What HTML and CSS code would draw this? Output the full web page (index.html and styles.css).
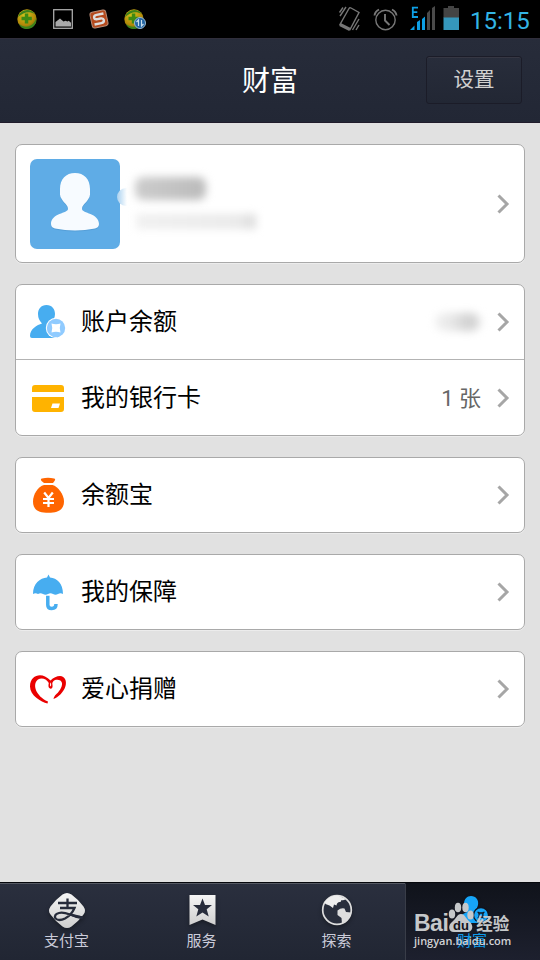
FILE: index.html
```html
<!DOCTYPE html>
<html lang="zh-CN">
<head>
<meta charset="utf-8">
<title>财富</title>
<link rel="stylesheet" href="styles.css">
</head>
<body>
<div class="screen">
  <div class="status">
    <svg class="status-icons" width="460" height="38" viewBox="0 0 460 38">
      <defs>
        <radialGradient id="ball" cx=".4" cy=".3" r=".75"><stop offset="0" stop-color="#d2c51e"/><stop offset=".65" stop-color="#b58a09"/><stop offset="1" stop-color="#66720c"/></radialGradient>
        <g id="guard">
          <circle cx="10" cy="10" r="9.7" fill="url(#ball)"/>
          <path d="M1 8C3 1 13-2 18 5C12 2 7 3 1 8ZM2 15C8 20 16 18 19 10C20 16 15 20 10 20C6 20 3 18 2 15Z" fill="#3c821b"/>
          <path d="M7.800 4.500h3.500v3.300h3.500v3.500h-3.500V14.500h-3.500v-3.200H4.500v-3.500h3.300Z" fill="#3d8a13"/>
        </g>
      </defs>
      <use href="#guard" x="17" y="9"/>
      <rect x="53.700" y="9.700" width="18.600" height="18.600" fill="none" stroke="#aaa" stroke-width="1.300"/>
      <path d="M55.500 26.500v-4.500l4.500-3.500 3.500 3 2-.8 2 .8 1.200-.8 2.300 2v3.800Z" fill="#aaa"/>
      <g transform="rotate(-12 99 19)">
        <rect x="91" y="11" width="16" height="16" rx="2.500" fill="#b54a1d" stroke="#b98d78" stroke-width="1"/>
        <path d="M104.500 14.500H97.500Q94.500 14.500 94.500 17Q94.500 18.800 97.500 18.800H100.500Q103.500 18.800 103.500 21Q103.500 23.500 100.500 23.500H93.500" fill="none" stroke="#ddd" stroke-width="2.400"/>
      </g>
      <use href="#guard" x="124" y="9"/>
      <circle cx="140" cy="23" r="5.500" fill="#2264a3" stroke="#96b7cf" stroke-width="1"/>
      <path d="M138.500 26v-6l-2 2M141.500 20v6l2-2" fill="none" stroke="#c6ddeb" stroke-width="1.200"/>
      <g fill="none" stroke="#777" stroke-width="1.400">
        <path d="M349 8.500Q349.700 7.300 351 8L359 12.500L350 29.500L340 24.500Z"/>
        <path d="M340 24.500l10 5" stroke-width="3.200"/>
        <path d="M340 16l6-9M339.500 12.500l3.500-5M352.500 30l6.500-11M356 30l3-5"/>
        <circle cx="385.500" cy="20" r="9.700"/>
        <path d="M385 14v6.500l4.500 4.500M374.500 15.500Q375 11.500 379 9.500M396.500 15.500Q396 11.500 392 9.500" stroke-width="1.900"/>
      </g>
      <path d="M410 30l4.500-4.500V30ZM417 22l3-2V30h-3ZM422 19l3-2.500V30h-3Z" fill="#0d9fe5"/>
      <path d="M427 13l3-3V30h-3ZM432 8l3-2V30h-3Z" fill="#4a4a4a"/>
      <path d="M418 7.700h-5.200v9.300h5.200M412.800 12.200h4.500" fill="none" stroke="#0d9fe5" stroke-width="1.800"/>
      <path d="M448 6h6v2h5v10h-15.500V8h4.500Z" fill="#444"/>
      <rect x="443.500" y="17.500" width="15.500" height="12.500" fill="#3597bc"/>
    </svg>
    <span class="clock">15:15</span>
  </div>

  <header class="header">
    <span></span>
    <h1 class="title">财富</h1>
    <button class="settings">设置</button>
  </header>

  <main class="content">
    <section class="card profile">
      <svg class="avatar" width="90" height="90" viewBox="0 0 90 90">
        <rect width="90" height="90" rx="7" fill="#5face6"/>
        <path d="M45 15C54 15 60 21 60 31V36.500Q60 39 58 41.500C56 45 52 47 52 51C52 55.500 69 55 69 66Q69 69.500 65 70.500Q45 74.500 25 70.500Q21 69.500 21 66C21 55 38 55.500 38 51C38 47 34 45 32 41.500Q30 39 30 36.500V31C30 21 36 15 45 15Z" fill="#4c91ca" opacity=".5"/>
        <path d="M45 14C54 14 60 20 60 30V35.500Q60 38 58 40.500C56 44 52 46 52 50C52 54.500 69 54 69 65Q69 68.500 65 69.500Q45 73.500 25 69.500Q21 68.500 21 65C21 54 38 54.500 38 50C38 46 34 44 32 40.500Q30 38 30 35.500V30C30 20 36 14 45 14Z" fill="#f7fbff"/>
      </svg>
      <div class="identity">
        <span class="smudge smudge-edge"></span>
        <span class="smudge smudge-name"></span>
        <span class="smudge smudge-account"></span>
      </div>
      <svg class="chevron" width="14" height="22" viewBox="0 0 14 22"><path d="M2.500 2.500L11 11L2.500 19.500"/></svg>
    </section>

    <section class="card">
      <div class="row">
        <svg class="icon" width="38" height="38" viewBox="0 0 38 38">
          <path d="M17.500 2C23 2 26 6 26 11C26 15 24 17.500 22 19.500C22 22 27 22 29 25V35H3Q1 35 1 33C1 26 8 22 13 20.500Q9 16.500 9 11C9 6 12 2 17.500 2Z" fill="#47adf0"/>
          <circle cx="27" cy="25" r="10.200" fill="#fff"/><circle cx="27" cy="25" r="9.200" fill="#90cbff"/>
          <path d="M22.500 20.500Q27 22 31.500 20.500Q30 25 31.500 29.500Q27 28 22.500 29.500Q24 25 22.500 20.500Z" fill="#fff"/>
        </svg>
        <span class="label">账户余额</span>
        <span class="smudge smudge-balance"></span>
        <svg class="chevron" width="14" height="22" viewBox="0 0 14 22"><path d="M2.500 2.500L11 11L2.500 19.500"/></svg>
      </div>
      <div class="row">
        <svg class="icon" width="38" height="38" viewBox="0 0 38 38">
          <path d="M6 6H32Q35 6 35 9V13H3V9Q3 6 6 6ZM3 18H35V30Q35 33 32 33H6Q3 33 3 30Z" fill="#ffb300"/>
          <path d="M23.500 24.500h7.500l-1.500 4.500h-7.500Z" fill="#fff"/>
        </svg>
        <span class="label">我的银行卡</span>
        <span class="value">1 张</span>
        <svg class="chevron" width="14" height="22" viewBox="0 0 14 22"><path d="M2.500 2.500L11 11L2.500 19.500"/></svg>
      </div>
    </section>

    <section class="card">
      <div class="row">
        <svg class="icon" width="38" height="38" viewBox="0 0 38 38">
          <path d="M13 2.500Q19 1 25 2.500Q27 3 25.500 5L24 7H15L12.500 5Q11 3 13 2.500Z" fill="#ff6500"/>
          <path d="M15 9H23.500C29 10.500 35 18.500 35 25.500C35 33.500 29 36.800 19.500 36.800C9 36.800 4 33.500 4 25.500C4 18.500 9 10.500 15 9Z" fill="#ff6500"/>
          <path d="M15.200 16.500l4.300 5.500 4.300-5.500M19.500 21v10M14 23h11M14 27h11" fill="none" stroke="#fff" stroke-width="2.200"/>
        </svg>
        <span class="label">余额宝</span>
        <svg class="chevron" width="14" height="22" viewBox="0 0 14 22"><path d="M2.500 2.500L11 11L2.500 19.500"/></svg>
      </div>
    </section>

    <section class="card">
      <div class="row">
        <svg class="icon" width="38" height="38" viewBox="0 0 38 38">
          <path d="M19.500 1.500L21 4.500C28 5 34 10.500 34 21Q31.500 19.500 29 21Q26.500 22.500 24 21Q21.500 19.500 19 21Q16.500 22.500 14 21Q11.500 19.500 9 21Q6.500 19.500 4 21C4 10.500 11 5 18 4.500Z" fill="#47adf0"/>
          <path d="M18.800 22.800v9.200Q18.800 35.500 22.700 35.500Q27 35.500 27 31" fill="none" stroke="#47adf0" stroke-width="3.500"/>
        </svg>
        <span class="label">我的保障</span>
        <svg class="chevron" width="14" height="22" viewBox="0 0 14 22"><path d="M2.500 2.500L11 11L2.500 19.500"/></svg>
      </div>
    </section>

    <section class="card">
      <div class="row">
        <svg class="icon" width="38" height="38" viewBox="0 0 38 38">
          <path d="M18.500 33.500C12 32 1 25.500 1 16.500C1 6 10 3.500 16 6.500Q19 8 21.500 10.500Q26 6 31 6C36 6.500 38 11 36.500 16C35 22 29 27.500 24.500 29Q24.500 27.500 26 25.500C30 22 33.500 17 33 13C32.500 10 29 9 26 10Q22.500 12 23.500 15Q24 18.700 21.500 18.700Q18.500 18 19.800 13C17 8 12 7.500 9 9.500C3 14 6.500 26 19 31.500Z" fill="#ea0000"/>
          <path d="M21.500 12.500Q20.500 16 21.500 16.500Q22.700 16 22 13Z" fill="#fff"/>
        </svg>
        <span class="label">爱心捐赠</span>
        <svg class="chevron" width="14" height="22" viewBox="0 0 14 22"><path d="M2.500 2.500L11 11L2.500 19.500"/></svg>
      </div>
    </section>
  </main>

  <nav class="tabs">
    <div class="tab">
      <svg class="tab-icon" width="38" height="38" viewBox="0 0 38 38">
        <defs><linearGradient id="silver" x1="0" y1="0" x2="0" y2="1"><stop stop-color="#f5f5f5"/><stop offset="1" stop-color="#cfcfcf"/></linearGradient></defs>
        <path d="M14.500 2.500Q19-.500 23.500 2.500Q31 8 35.500 14.500Q38.500 19 35.500 22.500Q30 30 23.500 34.500Q19 37.500 14.500 34.500Q8 30 2.500 22.500Q-.500 19 2.500 14.500Q7 8 14.500 2.500Z" fill="url(#silver)"/>
        <path d="M10 11h19M19.500 6.500v9.500M12 16h14.500Q23.500 23 17 26.500Q11 29.500 7.500 26.500Q5.500 22.500 11 21Q15 20 22 22.500Q28 25 35 25.500" fill="none" stroke="#272c3b" stroke-width="2.300"/>
        <path d="M23 21.500L35 24.500L34 27Q28 26.500 22 23.500Z" fill="#272c3b"/>
      </svg>
      <span>支付宝</span>
    </div>
    <div class="tab">
      <svg class="tab-icon" width="38" height="38" viewBox="0 0 38 38">
        <path d="M6.500 3H32.500V33L19.500 27.500L6.500 33Z" fill="url(#silver)"/>
        <path d="M19.500 6.500L22 13H29L23.700 17.300L25.700 24.500L19.500 20.500L13.300 24.500L15.300 17.300L10 13H17Z" fill="#272c3b"/>
      </svg>
      <span>服务</span>
    </div>
    <div class="tab">
      <svg class="tab-icon" width="38" height="38" viewBox="0 0 38 38">
        <circle cx="19" cy="18" r="14.300" fill="#292e3c" stroke="#ddd" stroke-width="1.700"/>
        <path d="M6.500 10Q12 3 20 3.500L28 7Q25 9 23.500 8L22.500 10Q19 9.500 18.500 13.500L16 12.500L15 16L11.500 13.500L7.500 12Z" fill="#eee"/>
        <path d="M19.500 18.500Q23 15.500 26.500 16.500L28 20L33.500 20.500Q31 29 24 32L23.500 26L19.500 23Z" fill="#ddd"/>
      </svg>
      <span>探索</span>
    </div>
    <div class="tab tab-active">
      <svg class="tab-icon" width="38" height="38" viewBox="0 0 38 38">
        <path d="M18 4C23 4 26 8 25 13Q24 17 22 20L28 24V31H4Q4 24 14 20Q11 16 11 12C11 7 14 4 18 4Z" fill="#16a5f8"/>
        <circle cx="28" cy="23" r="7.500" fill="#16a5f8" stroke="#10131d" stroke-width="1.300"/>
        <path d="M24.500 20q3.500 2 7 0M24.500 26q3.500-2 7 0M25.500 20q1.500 3 0 6M30.500 20q-1.500 3 0 6" fill="none" stroke="#10131d" stroke-width="1.300"/>
      </svg>
      <span>财富</span>
      <div class="watermark">
        <div class="brand"><span class="brand-latin">Bai</span>
          <svg class="paw" width="26" height="32" viewBox="0 0 26 32">
            <g fill="#c5c8ca"><ellipse cx="4" cy="13" rx="3.200" ry="4.500"/><ellipse cx="10" cy="6.500" rx="3.200" ry="4.700"/><ellipse cx="17.500" cy="6.500" rx="3.200" ry="4.700"/><ellipse cx="22.500" cy="14" rx="3.200" ry="4.500"/><path d="M13 13C17 13 18 18 22 21C27 26 23 32 18 31H7C1 32-1 25 4 21C8 18 9 13 13 13Z"/></g>
            <text x="13" y="28.500" text-anchor="middle" class="paw-text">du</text>
          </svg><span class="brand-cn">经验</span></div>
        <div class="site">jingyan.baidu.com</div>
      </div>
    </div>
  </nav>
</div>
</body>
</html>
```

FILE: styles.css
```css
* { box-sizing: border-box; }

body {
  margin: 0;
  background: #e1e1e1;
  font-family: Roboto, "Noto Sans CJK SC", sans-serif;
}

.screen {
  display: flex;
  flex-direction: column;
  width: 540px;
  height: 960px;
  overflow: hidden;
}

.status {
  display: flex;
  align-items: center;
  height: 38px;
  flex: none;
  background: #000;
}

.status-icons { flex: none; }

.clock {
  margin: 3px 0 0 10px;
  color: #33b5e5;
  font-size: 24px;
  line-height: 36px;
  white-space: nowrap;
}

.header {
  display: grid;
  grid-template-columns: 1fr auto 1fr;
  align-items: center;
  height: 85px;
  flex: none;
  padding: 0 18px;
  background: linear-gradient(#272c3a, #222735);
  border-top: 1px solid #302e3b;
  border-bottom: 1px solid #201c2b;
}

.title {
  margin: 2px 0 0;
  color: #fff;
  font-size: 28px;
  font-weight: 400;
  line-height: 40px;
}

.settings {
  justify-self: end;
  width: 96px;
  height: 48px;
  margin-bottom: 2px;
  padding: 0 0 3px;
  border: 1px solid #1b1c28;
  border-radius: 3px;
  background: linear-gradient(#282d3b, #222734);
  box-shadow: inset 0 1px #363743;
  color: #d0d0d0;
  font: 20.5px "Noto Sans CJK SC", sans-serif;
}

.content {
  display: flex;
  flex: 1;
  flex-direction: column;
  gap: 21px;
  padding: 21px 15px;
}

.card {
  border: 1px solid #a9a9a9;
  border-radius: 7px;
  background: #fff;
  box-shadow: 0 1px #ececec;
}

.profile {
  display: flex;
  align-items: center;
  height: 119px;
  padding: 0 14px;
}

.avatar, .icon, .chevron { flex: none; }

.identity {
  position: relative;
  flex: 1;
  height: 90px;
}

.row {
  display: flex;
  align-items: center;
  height: 74px;
  padding: 0 14px 0 13px;
}

.row + .row {
  height: 76px;
  border-top: 1px solid #b3b3b3;
}

.label {
  margin-left: 14px;
  color: #000;
  font-size: 24px;
  line-height: 36px;
}

.value {
  margin: 0 0 3px auto;
  color: #666;
  font-size: 22px;
}

.chevron {
  margin-left: auto;
  fill: none;
  stroke: #a6a6a6;
  stroke-width: 3;
}

.value + .chevron, .smudge + .chevron { margin-left: 15px; }

.smudge { display: block; }

.smudge-name {
  position: absolute;
  left: 15px;
  top: 18px;
  width: 71px;
  height: 23px;
  border-radius: 8px;
  background: linear-gradient(90deg, #ccc, #bbb);
  filter: blur(4.5px);
}

.smudge-account {
  position: absolute;
  left: 16px;
  top: 55px;
  width: 120px;
  height: 15px;
  background: linear-gradient(90deg, #f0f0f0, #e9e9e9 85%, #dcdcdc);
  filter: blur(4.5px);
}

.smudge-edge {
  position: absolute;
  left: -3px;
  top: 29px;
  width: 10px;
  height: 18px;
  border-radius: 9px 0 0 9px;
  background: linear-gradient(90deg, #a9d1f0, #fff);
}

.smudge-balance {
  width: 46px;
  height: 18px;
  margin-left: auto;
  border-radius: 9px;
  background: linear-gradient(90deg, #f0f0f0, #e8e8e8 35%, #cfcfcf 75%, #e2e2e2);
  filter: blur(4px);
}

.tabs {
  display: grid;
  grid-template-columns: repeat(4, 1fr);
  height: 78px;
  flex: none;
  border-top: 1px solid #05070b;
  background: linear-gradient(#2a2f3e, #212633);
}

.tab {
  position: relative;
  display: flex;
  flex-direction: column;
  align-items: center;
  padding: 8px 2px 0 0;
  border-top: 1px solid #555963;
  color: #cbccda;
  font-size: 15px;
  line-height: 20px;
}

.tab > span { margin-top: 1px; }

.tab-icon {
  flex: none;
  filter: drop-shadow(0 2px 2px rgba(0, 0, 0, 0.35));
}

.tab-active {
  border-top-color: #10131c;
  border-left: 1px solid #393d48;
  background: linear-gradient(#10131b, #1d202e);
  color: #109cea;
}

.watermark {
  position: absolute;
  left: 8px;
  top: 19px;
  width: 98px;
  color: #c5c8ca;
}

.brand {
  display: flex;
  align-items: flex-end;
  height: 32px;
  white-space: nowrap;
}

.brand-latin {
  height: 24px;
  font: bold 23px/24px "Liberation Sans", sans-serif;
  letter-spacing: -0.5px;
}

.paw { flex: none; margin-bottom: 2px; }

.paw-text {
  fill: #10131b;
  font: bold 13px "Liberation Sans", sans-serif;
}

.brand-cn {
  margin-left: 2px;
  font: bold 16.5px/23px "Noto Sans CJK SC", sans-serif;
}

.site {
  margin-top: -2px;
  color: #d1d2d5;
  font: 600 11px/15px "Open Sans", sans-serif;
  white-space: nowrap;
}
```
